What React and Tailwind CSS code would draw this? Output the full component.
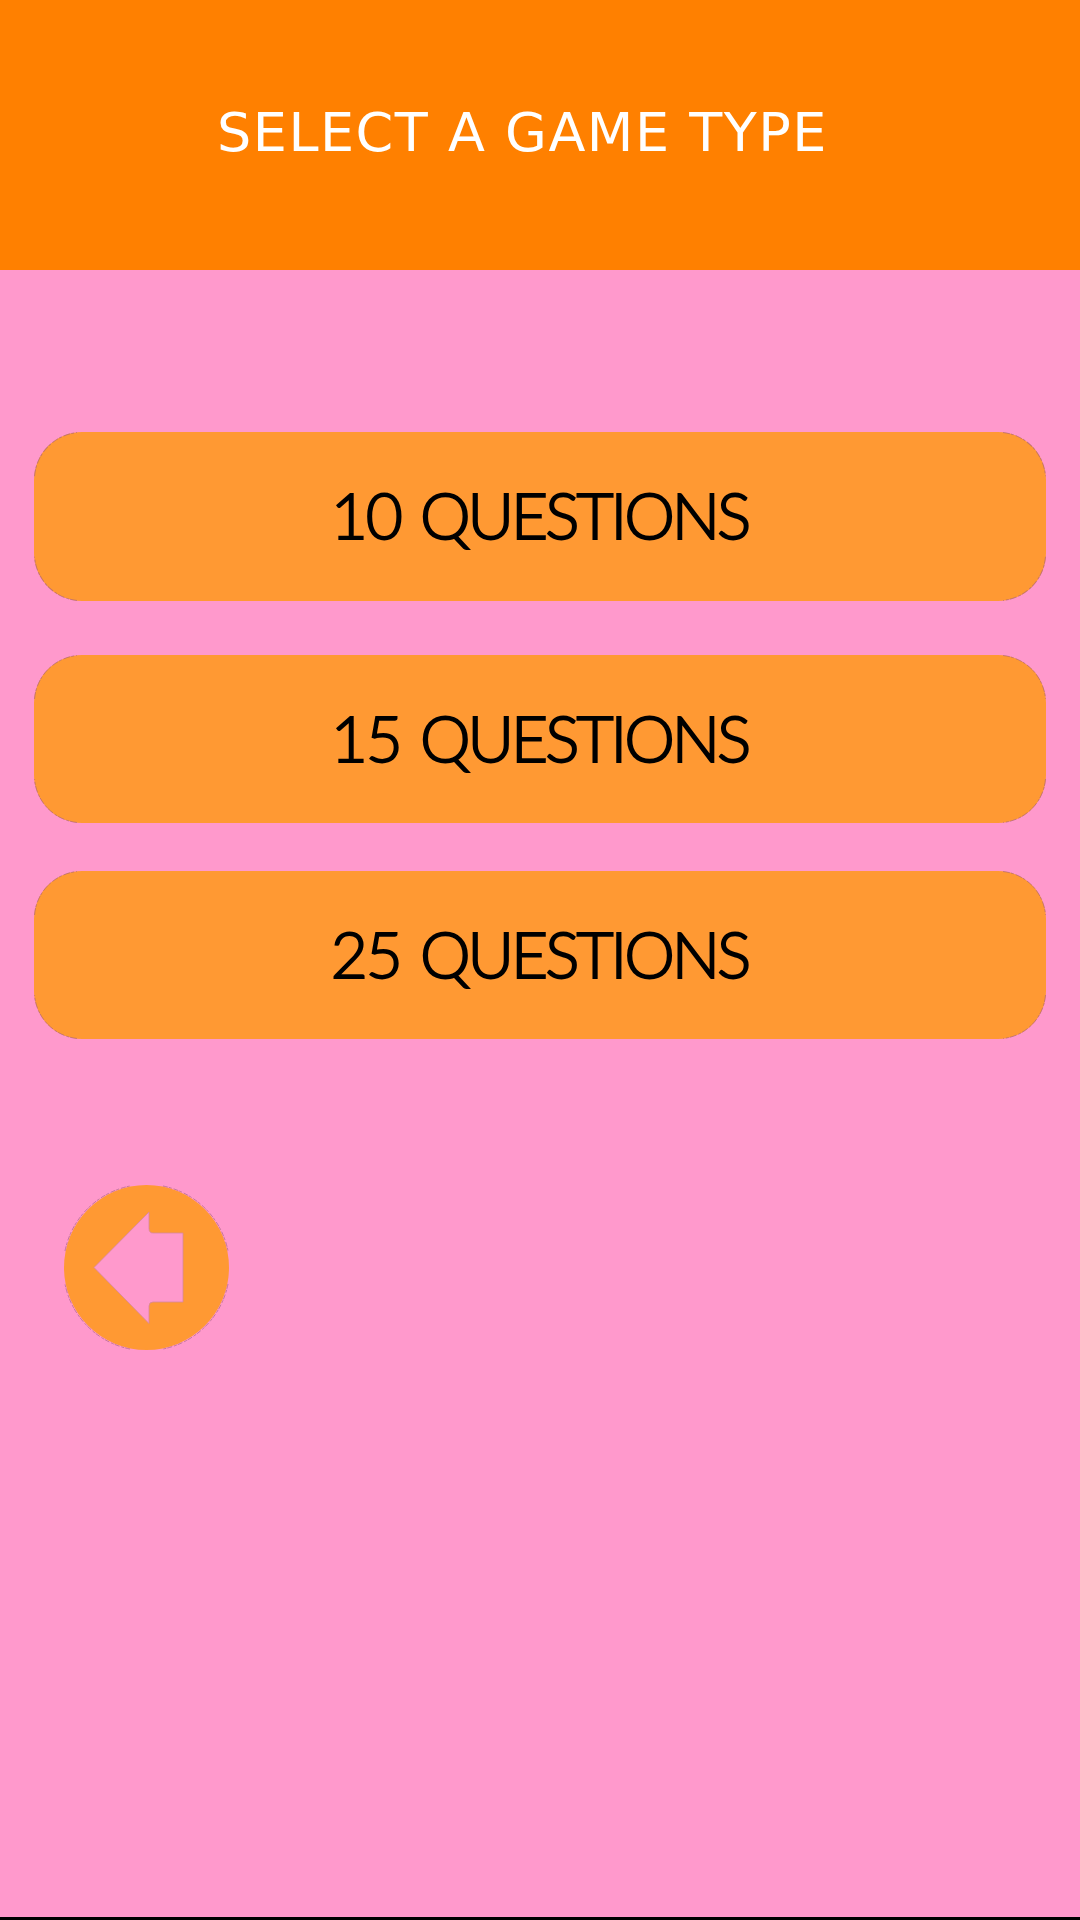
import React from "react";

const gameTypes = [
  { count: "10", spacing: "mt-[162px] h-[169px]" },
  { count: "15", spacing: "mt-[54px] h-[168px]" },
  { count: "25", spacing: "mt-12 h-[168px]" },
];

function GameButton({ count, spacing }) {
  return (
    <button
      className={`relative ml-[34px] w-[1012px] flex items-center justify-center rounded-[48px] bg-[#ff9933] text-black ${spacing}`}
    >
      <svg
        className="absolute inset-0 w-full h-full"
        viewBox="0 0 1012 168"
        preserveAspectRatio="none"
        fill="none"
        stroke="#a0607c"
        strokeOpacity="0.6"
        strokeWidth="1"
        strokeDasharray="7 1 3 2"
      >
        <path d="M.5 44A47.500 47.500 0 0 1 43 .5M969 .5A47.500 47.500 0 0 1 1011.500 44M1011.500 124A47.500 47.500 0 0 1 969 167.500M43 167.500A47.500 47.500 0 0 1 .5 124" />
      </svg>
      <span className="flex gap-[19px] pb-[3px] pr-px font-[Lato,sans-serif] font-light text-[64px] leading-none whitespace-nowrap [-webkit-text-stroke:1.9px_black]">
        <span className="tracking-[-2px]">{count}</span>
        <span className="tracking-[-3px]">QUESTIONS</span>
      </span>
    </button>
  );
}

function BackButton() {
  return (
    <button className="ml-16 mt-[146px] w-[165px] h-[165px]" aria-label="Back">
      <svg className="block w-full h-full" viewBox="0 0 165 165">
        <circle cx="82.5" cy="82.5" r="82.5" fill="#ff9933" />
        <path
          d="M1 66A82.500 82.500 0 0 1 66 1M99 1A82.500 82.500 0 0 1 164 66M164 99A82.500 82.500 0 0 1 99 164M66 164A82.500 82.500 0 0 1 1 99"
          fill="none"
          stroke="#a0607c"
          strokeOpacity="0.6"
          strokeDasharray="5 1 3 2"
        />
        <path
          d="M30 82.500L85 27V43.500Q85 48 89 48H119V117H89Q85 117 85 121V138.500Z"
          fill="#ff99cc"
          stroke="#d4879c"
          strokeOpacity="0.8"
        />
      </svg>
    </button>
  );
}

export default function App() {
  return (
    <div className="w-[1080px] h-[1920px] flex flex-col overflow-hidden bg-[#ff99cc] border-b-3 border-black">
      <header className="h-[270px] shrink-0 flex items-center pb-1 bg-[#ff8000]">
        <h1 className="ml-[217px] font-['DejaVu_Sans',sans-serif] text-[54px] leading-none tracking-[1.5px] whitespace-nowrap text-white">
          SELECT A GAME TYPE
        </h1>
      </header>
      <main>
        <div className="flex flex-col">
          {gameTypes.map((type) => (
            <GameButton key={type.count} {...type} />
          ))}
        </div>
        <BackButton />
      </main>
    </div>
  );
}
